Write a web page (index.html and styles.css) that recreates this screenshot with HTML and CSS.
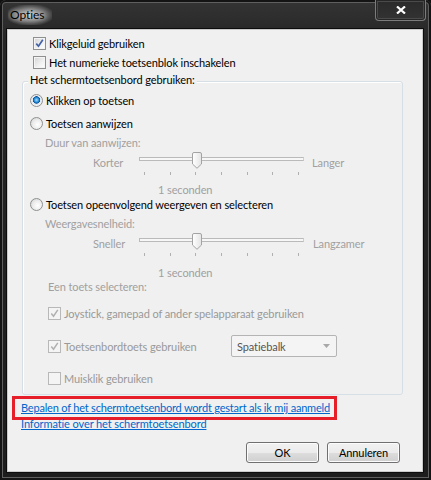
FILE: index.html
```html
<!DOCTYPE html>
<html lang="nl">
<head>
    <meta charset="UTF-8">
    <title>Opties</title>
    <link rel="stylesheet" href="styles.css">
</head>
<body>
    <div class="window">
        <!-- Title bar -->
        <div class="titlebar">
            <span class="title">Opties</span>
            <div class="close-btn">
                <svg width="10" height="8" viewBox="0 0 10 8"><path d="M1 0.5 L9 7.5 M9 0.5 L1 7.5" stroke="#fff" stroke-width="2.2"/></svg>
            </div>
        </div>

        <div class="client">
            <!-- Top options -->
            <div class="row top-row">
                <span class="check checked"></span>
                <span>Klikgeluid gebruiken</span>
            </div>
            <div class="row top-row">
                <span class="check"></span>
                <span>Het numerieke toetsenblok inschakelen</span>
            </div>

            <!-- Group box -->
            <div class="group">
                <div class="group-title">Het schermtoetsenbord gebruiken:</div>

                <div class="row radio-row r1">
                    <span class="radio selected"></span>
                    <span>Klikken op toetsen</span>
                </div>
                <div class="row radio-row r2">
                    <span class="radio"></span>
                    <span>Toetsen aanwijzen</span>
                </div>
                <div class="sub-label l1">Duur van aanwijzen:</div>
                <div class="slider-row s1">
                    <span class="slider-label">Korter</span>
                    <div class="slider">
                        <div class="track"></div>
                        <svg class="thumb" width="10" height="17" viewBox="0 0 10 17">
                            <defs><linearGradient id="tg" x1="0" y1="0" x2="1" y2="0"><stop offset="0" stop-color="#ffffff"/><stop offset="1" stop-color="#e4e4e4"/></linearGradient></defs>
                            <path d="M2 0.5 H8 A1.5 1.5 0 0 1 9.5 2 V12 L5 16.3 L0.5 12 V2 A1.5 1.5 0 0 1 2 0.5 Z" fill="url(#tg)" stroke="#a3a3a3"/>
                        </svg>
                        <div class="ticks"><i></i><i></i><i></i><i></i><i></i><i></i><i></i></div>
                    </div>
                    <span class="slider-end">Langer</span>
                </div>
                <div class="value v1">1 seconden</div>

                <div class="row radio-row r3">
                    <span class="radio"></span>
                    <span>Toetsen opeenvolgend weergeven en selecteren</span>
                </div>
                <div class="sub-label l2">Weergavesnelheid:</div>
                <div class="slider-row s2">
                    <span class="slider-label">Sneller</span>
                    <div class="slider">
                        <div class="track"></div>
                        <svg class="thumb" width="10" height="17" viewBox="0 0 10 17">
                            <path d="M2 0.5 H8 A1.5 1.5 0 0 1 9.5 2 V12 L5 16.3 L0.5 12 V2 A1.5 1.5 0 0 1 2 0.5 Z" fill="url(#tg)" stroke="#a3a3a3"/>
                        </svg>
                        <div class="ticks"><i></i><i></i><i></i><i></i><i></i><i></i><i></i></div>
                    </div>
                    <span class="slider-end">Langzamer</span>
                </div>
                <div class="value v2">1 seconden</div>

                <div class="sub-label l3">Een toets selecteren:</div>
                <div class="row sel-row c1">
                    <span class="check checked disabled"></span>
                    <span>Joystick, gamepad of ander spelapparaat gebruiken</span>
                </div>
                <div class="row sel-row c2">
                    <span class="check checked disabled"></span>
                    <span class="key-label">Toetsenbordtoets gebruiken</span>
                    <div class="combo">
                        <span>Spatiebalk</span>
                        <svg width="7" height="4" viewBox="0 0 7 4"><path d="M0 0 H7 L3.5 4 Z" fill="#a8a8a8"/></svg>
                    </div>
                </div>
                <div class="row sel-row c3">
                    <span class="check disabled"></span>
                    <span>Muisklik gebruiken</span>
                </div>
            </div>

            <!-- Links -->
            <div class="highlight">
                <a href="#">Bepalen of het schermtoetsenbord wordt gestart als ik mij aanmeld</a>
            </div>
            <div class="link-row">
                <a href="#">Informatie over het schermtoetsenbord</a>
            </div>

            <!-- Buttons -->
            <div class="buttons">
                <button>OK</button>
                <button>Annuleren</button>
            </div>
        </div>
    </div>
</body>
</html>
```
FILE: styles.css
```css
/* Basic setup */
* {
    margin: 0;
    padding: 0;
    box-sizing: border-box;
}

body {
    width: 431px;
    height: 480px;
    overflow: hidden;
    background-color: #111;
    font-family: 'Lato', 'Liberation Sans', sans-serif;
    font-size: 11px;
    letter-spacing: -0.1px;
    color: #000;
}

/* Window frame */
.window {
    width: 431px;
    height: 480px;
    padding: 0 8px 8px 7px;
    background: linear-gradient(#343434, #262626 40px, #1c1c1c);
    border-radius: 6px 6px 0 0;
    box-shadow: inset 0 0 0 2px #141414, inset 0 0 0 3px #5e5e5e;
}

.titlebar {
    height: 29px;
    display: flex;
    justify-content: space-between;
    align-items: flex-start;
    padding-left: 1px;
}

.title {
    margin-top: 5px;
    padding: 3px 8px 3px 2px;
    font-size: 12px;
    line-height: 14px;
    color: #000;
    text-shadow: 0 0 4px rgba(255, 255, 255, 0.6);
    background: radial-gradient(ellipse at center, rgba(225, 225, 225, 0.85) 0%, rgba(180, 180, 180, 0.6) 45%, rgba(60, 60, 60, 0) 80%);
}

.close-btn {
    width: 51px;
    height: 21px;
    margin-right: -3px;
    display: flex;
    align-items: center;
    justify-content: center;
    border: 1px solid #7c7c7c;
    border-top: none;
    border-radius: 0 0 4px 4px;
    box-shadow: inset 0 0 0 1px #262626, inset 0 0 0 2px #4a4a4a;
    background: linear-gradient(#2a2a2a, #333);
}

/* Client area */
.client {
    height: 443px;
    padding-top: 4px;
    background-color: #f0f0f0;
    border: 1px solid #c9c9c9;
    box-shadow: 0 0 0 1px #0c0c0c;
}

.row {
    display: flex;
    align-items: center;
    white-space: nowrap;
}

.top-row {
    height: 19px;
    padding-left: 25px;
    gap: 3px;
}

/* Checkbox and radio */
.check {
    width: 13px;
    height: 13px;
    flex-shrink: 0;
    border: 1px solid #8e8f8f;
    background: linear-gradient(135deg, #d3d3d3, #f3f3f3 65%, #ffffff);
    box-shadow: inset 0 0 0 1px #f4f4f4;
}

.check.checked {
    background-image: url("data:image/svg+xml,%3Csvg xmlns='http://www.w3.org/2000/svg' width='11' height='11'%3E%3Cpath d='M2.3 5.6 L4.5 8.2 L8.8 1.8' fill='none' stroke='%234161a9' stroke-width='1.7'/%3E%3C/svg%3E"), linear-gradient(135deg, #d3d3d3, #f3f3f3 65%, #ffffff);
}

.check.disabled {
    border-color: #b8b8b8;
    background: #f4f4f4;
}

.check.checked.disabled {
    background-image: url("data:image/svg+xml,%3Csvg xmlns='http://www.w3.org/2000/svg' width='11' height='11'%3E%3Cpath d='M2.3 5.6 L4.5 8.2 L8.8 1.8' fill='none' stroke='%23b0b0b0' stroke-width='1.5'/%3E%3C/svg%3E");
    background-color: #f4f4f4;
}

.radio {
    width: 13px;
    height: 13px;
    flex-shrink: 0;
    border-radius: 50%;
    border: 1px solid #8e8f8f;
    background: radial-gradient(circle at 60% 60%, #ffffff 0%, #eeeeee 45%, #cfcfcf 100%);
}

.radio.selected {
    background: radial-gradient(circle at 50% 45%, #a4dcff 0%, #2a8fda 28%, #0b4f93 42%, #dfe6ee 48%, #f4f4f4 70%, #d6d6d6 100%);
}

/* Group box */
.group {
    height: 314px;
    margin: 9px 19px 0 14px;
    border: 1px solid #d5dfe5;
    border-radius: 3px;
    padding-left: 7px;
    box-shadow: inset 1px 1px 0 #fff;
}

.group-title {
    width: fit-content;
    margin: -9px 0 0 -2px;
    padding: 0 2px;
    line-height: 14px;
    background-color: #f0f0f0;
}

.radio-row {
    gap: 3px;
}

.r1 { height: 18px; margin-top: 4px; }
.r2 { height: 18px; margin-top: 5px; }
.r3 { height: 15px; margin-top: 0; }

.sub-label,
.value,
.slider-label,
.slider-end {
    color: #a0a0a0;
    line-height: 14px;
    white-space: nowrap;
}

.sub-label {
    height: 14px;
    padding-left: 15px;
}

.l1 { margin-top: 4px; }
.l2 { margin-top: 5px; }
.l3 { margin-top: 0; padding-left: 18px; }

/* Sliders */
.slider-row {
    display: flex;
    align-items: flex-start;
    height: 24px;
    padding-left: 63px;
}

.s1 { margin-top: 2px; }
.s2 { margin-top: 2px; }

.slider-label {
    width: 46px;
    margin-top: 4px;
}

.slider-end {
    margin-top: 4px;
    margin-left: 8px;
}

.s2 .slider-end {
    margin-left: 9px;
}

.slider {
    position: relative;
    width: 165px;
    height: 24px;
}

.track {
    margin-top: 5px;
    height: 4px;
    border: 1px solid #bababa;
    border-right-color: #d0d0d0;
    background-color: #f7f7f7;
}

.thumb {
    position: absolute;
    left: 53px;
    top: 0;
}

.ticks {
    display: flex;
    justify-content: space-between;
    margin: 11px 5px 0 5px;
}

.ticks i {
    width: 1px;
    height: 3px;
    background-color: #b0b0b0;
}

.value {
    height: 14px;
    padding-left: 128px;
}

.v1 { margin-top: 7px; }
.v2 { margin-top: 9px; }

/* Select options */
.sel-row {
    gap: 3px;
    padding-left: 18px;
    color: #999;
}

.c1 { height: 18px; margin-top: 10px; }
.c2 { height: 22px; margin-top: 13px; }
.c3 { height: 18px; margin-top: 12px; }

.key-label {
    width: 164px;
}

.combo {
    width: 106px;
    height: 22px;
    display: flex;
    justify-content: space-between;
    align-items: center;
    padding: 0 6px 0 5px;
    border: 1px solid #b4b4b4;
    border-radius: 2px;
    background-color: #f4f4f4;
    color: #555;
}

/* Links */
a {
    color: #0066cc;
}

.highlight {
    width: 325px;
    height: 24px;
    margin: 1px 0 0 4px;
    padding-left: 6px;
    border: 3px solid #e51e2a;
    line-height: 17px;
    white-space: nowrap;
    letter-spacing: -0.2px;
}

.link-row {
    height: 14px;
    margin-top: -3px;
    padding-left: 13px;
    line-height: 14px;
    white-space: nowrap;
}

/* Buttons */
.buttons {
    display: flex;
    justify-content: flex-end;
    gap: 8px;
    margin-top: 11px;
    padding-right: 22px;
}

button {
    width: 73px;
    height: 21px;
    font-family: inherit;
    font-size: 11px;
    letter-spacing: -0.1px;
    color: #000;
    border: 1px solid #707070;
    border-radius: 3px;
    background: linear-gradient(#f2f2f2 0%, #ebebeb 50%, #dddddd 51%, #cfcfcf 100%);
    box-shadow: inset 0 0 0 1px #fcfcfc;
}
```
